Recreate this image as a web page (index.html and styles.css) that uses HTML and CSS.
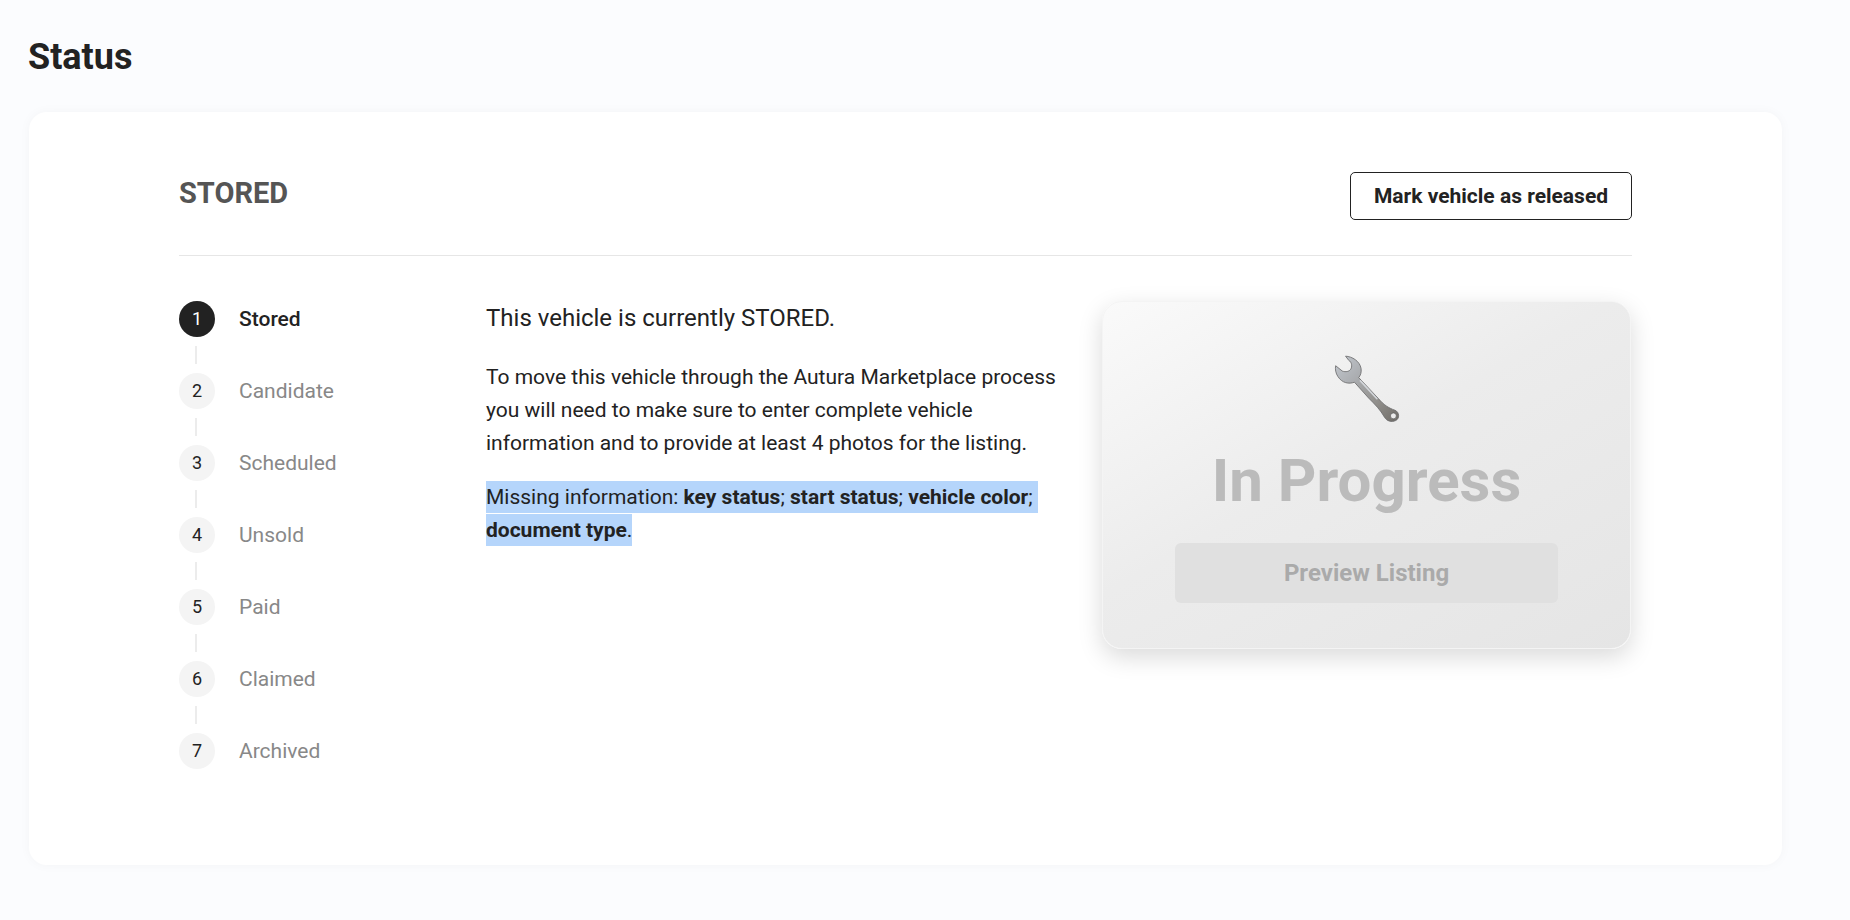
FILE: index.html
```html
<!DOCTYPE html>
<html lang="en">
<head>
<meta charset="utf-8">
<title>Status</title>
<link rel="stylesheet" href="styles.css">
</head>
<body>
<main class="page">
  <h1 class="page-title">Status</h1>
  <section class="card">
    <header class="card-head">
      <h2 class="state">STORED</h2>
      <button class="outline-btn" type="button">Mark vehicle as released</button>
    </header>
    <div class="card-body">
      <ol class="steps">
        <li class="step step-active"><span class="num">1</span><span class="label">Stored</span></li>
        <li class="link"></li>
        <li class="step"><span class="num">2</span><span class="label">Candidate</span></li>
        <li class="link"></li>
        <li class="step"><span class="num">3</span><span class="label">Scheduled</span></li>
        <li class="link"></li>
        <li class="step"><span class="num">4</span><span class="label">Unsold</span></li>
        <li class="link"></li>
        <li class="step"><span class="num">5</span><span class="label">Paid</span></li>
        <li class="link"></li>
        <li class="step"><span class="num">6</span><span class="label">Claimed</span></li>
        <li class="link"></li>
        <li class="step"><span class="num">7</span><span class="label">Archived</span></li>
      </ol>
      <div class="copy">
        <p class="lead">This vehicle is currently STORED.</p>
        <p>To move this vehicle through the Autura Marketplace process you will need to make sure to enter complete vehicle information and to provide at least 4 photos for the listing.</p>
        <p><span class="sel">Missing information: <b>key status</b>; <b>start status</b>; <b>vehicle color</b><span class="trail">;</span> <b>document type</b>.</span></p>
      </div>
      <aside class="preview">
        <svg class="wrench" viewBox="160 40 200 202" width="66" height="67" aria-hidden="true">
          <defs>
            <linearGradient id="metal" x1="0" y1="0" x2="1" y2="1">
              <stop offset="0" stop-color="#c3c8cf"/>
              <stop offset="0.35" stop-color="#a9abae"/>
              <stop offset="0.7" stop-color="#8f8d89"/>
              <stop offset="1" stop-color="#6f6c68"/>
            </linearGradient>
          </defs>
          <path fill="url(#metal)" stroke="#6a6a6b" stroke-width="2.5" stroke-linejoin="round" d="M195 43C215 44 238 58 242 80C244 92 240 102 235 108L295 172C310 190 325 200 345 207C358 212 360 232 347 238C335 244 320 240 313 228C300 205 285 190 265 170L222 122C205 128 185 125 172 105C165 95 163 82 165 72L185 88C195 92 208 90 212 80C216 70 212 60 205 56Z"/>
          <path fill="none" stroke="#d2d5d9" stroke-width="5" stroke-linecap="round" d="M240 118L290 172"/>
          <circle cx="340" cy="224" r="9" fill="#ececec" stroke="#555" stroke-width="2"/>
        </svg>
        <div class="preview-title">In Progress</div>
        <div class="preview-btn">Preview Listing</div>
      </aside>
    </div>
  </section>
</main>
</body>
</html>
```

FILE: styles.css
```css
* { box-sizing: border-box; }

html, body { margin: 0; padding: 0; }

body {
  background: #fbfcfe;
  color: #222;
  font-family: Roboto, "Liberation Sans", sans-serif;
}

.page {
  width: 1850px;
  height: 920px;
  padding: 0 68px 0 29px;
  overflow: hidden;
}

.page-title {
  margin: 0 0 0 -1px;
  height: 112px;
  padding-top: 36px;
  font-size: 36px;
  line-height: 42px;
  font-weight: 700;
  color: #222;
}

.card {
  height: 753px;
  padding: 60px 150px 0;
  background: #fff;
  border-radius: 18px;
  box-shadow: 0 0 12px rgba(0, 0, 0, 0.035);
}

.card-head {
  display: flex;
  justify-content: space-between;
  align-items: flex-start;
  height: 84px;
  border-bottom: 1px solid #e6e6e6;
}

.state {
  margin: 0;
  font-size: 29px;
  line-height: 42px;
  font-weight: 700;
  color: #555;
}

.outline-btn {
  width: 282px;
  height: 48px;
  padding: 0;
  background: #fff;
  border: 1px solid #222;
  border-radius: 5px;
  font-family: inherit;
  font-size: 21px;
  font-weight: 700;
  color: #222;
}

.card-body {
  display: flex;
  align-items: flex-start;
  padding-top: 45px;
}

.steps {
  flex: 0 0 307px;
  margin: 0;
  padding: 0;
  list-style: none;
}

.step {
  display: flex;
  align-items: center;
  height: 36px;
}

.num {
  flex: 0 0 36px;
  height: 36px;
  margin-right: 24px;
  border-radius: 50%;
  background: #f4f4f4;
  color: #222;
  font-size: 18px;
  line-height: 36px;
  text-align: center;
}

.label {
  font-size: 21px;
  color: #888;
}

.step-active .num {
  background: #222;
  color: #fff;
}

.step-active .label {
  color: #222;
  font-weight: 500;
}

.link {
  width: 2px;
  height: 18px;
  margin: 9px 0 9px 16px;
  background: #ececec;
}

.copy {
  flex: 0 0 576px;
  margin-right: 40px;
  padding-top: 1px;
  font-size: 21px;
  line-height: 33px;
}

.copy p {
  margin: 0 0 21px;
}

.copy .lead {
  margin-bottom: 26px;
  font-size: 24px;
  line-height: 33px;
}

.sel {
  padding: 4px 0;
  background: #b5d5fb;
  -webkit-box-decoration-break: clone;
  box-decoration-break: clone;
}

.trail {
  padding-right: 5px;
}

.preview {
  flex: 0 0 529px;
  height: 348px;
  padding-top: 53px;
  display: flex;
  flex-direction: column;
  align-items: center;
  border: 1px solid #f4f4f4;
  border-radius: 20px;
  background: linear-gradient(150deg, #fafafa 0%, #ececec 45%, #e5e5e5 100%);
  box-shadow: 0 8px 24px rgba(0, 0, 0, 0.15);
}

.wrench {
  display: block;
}

.preview-title {
  margin-top: 24px;
  font-size: 60px;
  line-height: 70px;
  font-weight: 700;
  color: #bbb;
}

.preview-btn {
  width: 383px;
  height: 60px;
  margin-top: 27px;
  border-radius: 6px;
  background: #e0e0e0;
  color: #aaa;
  font-size: 24px;
  font-weight: 700;
  line-height: 60px;
  text-align: center;
}
```
